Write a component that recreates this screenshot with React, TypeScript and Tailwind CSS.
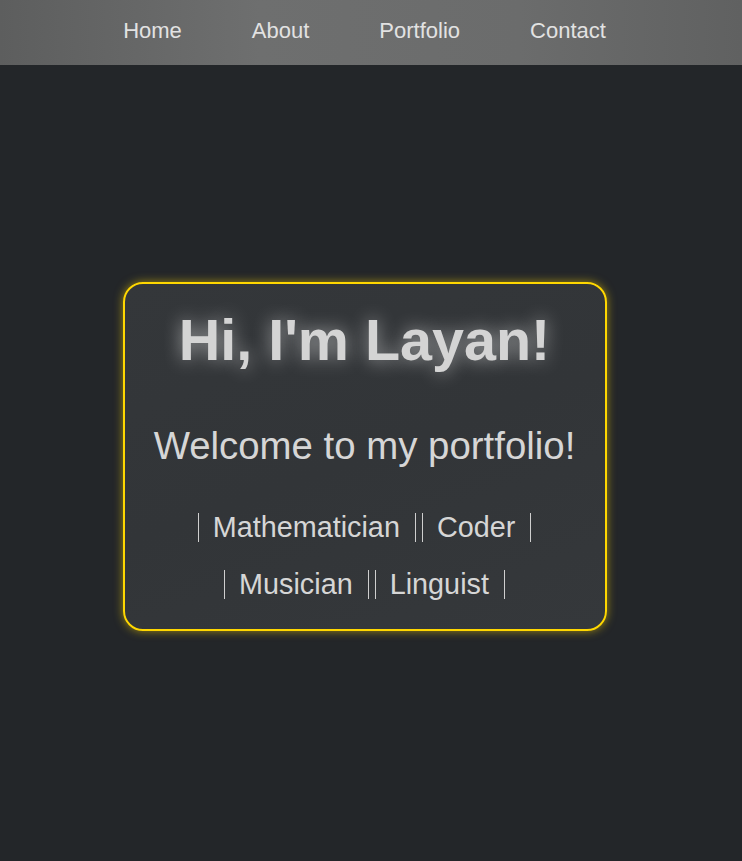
import React from 'react';

const NAV = ['Home', 'About', 'Portfolio', 'Contact'];
const ROWS = [
  ['Mathematician', 'Coder'],
  ['Musician', 'Linguist'],
];

export default function App() {
  return (
    <div className="min-h-screen bg-[#232629] font-['Liberation_Sans',Arial,sans-serif] text-[#d6d6d6]">
      {/* Nav */}
      <nav className="h-[65px] bg-[linear-gradient(90deg,#5d5e5e_0%,#6e6f6f_35%,#6b6c6c_70%,#606161_100%)] flex items-center justify-center pr-[13px] pb-[4px]">
        <ul className="flex gap-[70px]">
          {NAV.map((item) => (
            <li key={item} className="text-[22px] leading-none text-[#e2e2e2]">
              {item}
            </li>
          ))}
        </ul>
      </nav>

      {/* Hero card */}
      <main className="h-[796px] flex items-center justify-center pb-[13px] pr-[13px]">
        <div className="w-[484px] h-[349px] rounded-[20px] border-2 border-[#ffd700] bg-[linear-gradient(160deg,#34373a_0%,#323538_50%,#35383b_100%)] shadow-[0_0_10px_rgba(255,215,0,0.55)] flex flex-col items-center pt-[28px]">
          <h1 className="text-[57.5px] leading-none font-bold text-[#d4d4d4] [text-shadow:0_0_18px_rgba(255,255,255,0.55)]">
            Hi, I'm Layan!
          </h1>
          <p className="mt-[57px] text-[38.4px] leading-none text-[#d6d6d6]">
            Welcome to my portfolio!
          </p>
          <div className="mt-[48px] flex flex-col items-center gap-[28px]">
            {ROWS.map((row, i) => (
              <div key={i} className="flex gap-[6px]">
                {row.map((tag) => (
                  <span
                    key={tag}
                    className="h-[29px] flex items-center pl-[14px] pr-[15px] border-x border-[#cfcfcf] text-[28.8px] leading-none text-[#d6d6d6]"
                  >
                    {tag}
                  </span>
                ))}
              </div>
            ))}
          </div>
        </div>
      </main>
    </div>
  );
}
